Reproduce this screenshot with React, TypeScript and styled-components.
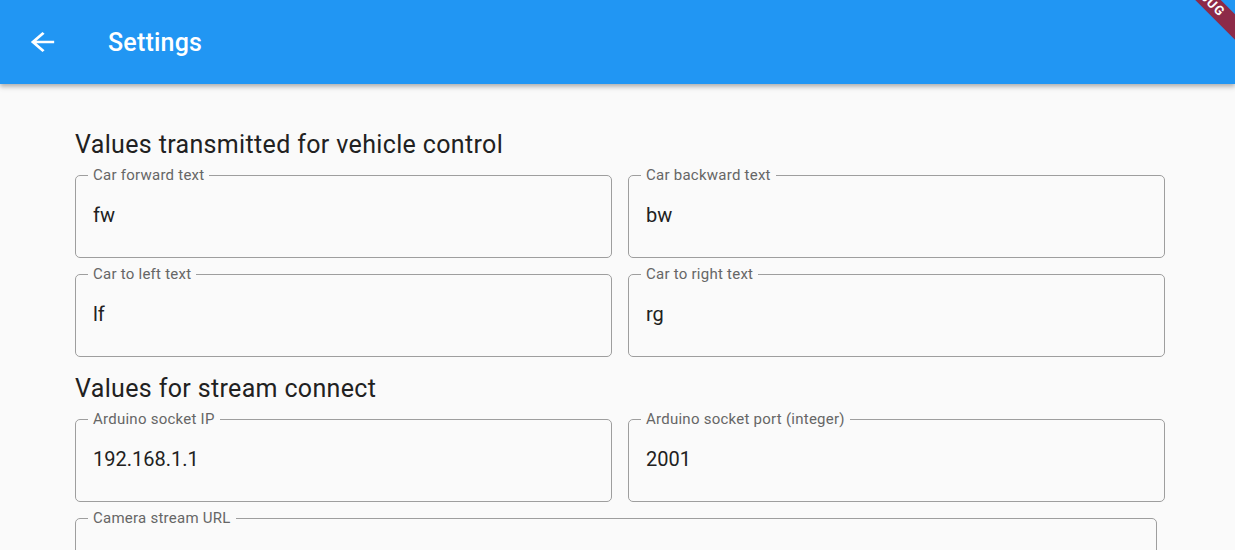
import React from 'react';
import styled, { createGlobalStyle } from 'styled-components';

const GlobalStyle = createGlobalStyle`
  html, body {
    margin: 0;
    padding: 0;
    background: #fafafa;
    overflow: hidden;
    font-family: Roboto, "Noto Sans", "Liberation Sans", sans-serif;
  }
`;

const Screen = styled.div`
  position: relative;
  width: 100%;
  min-height: 100vh;
  overflow: hidden;
  background: #fafafa;
`;

const AppBar = styled.header`
  position: relative;
  z-index: 2;
  height: 84px;
  display: flex;
  align-items: center;
  background: #2196f3;
  box-shadow: 0 2px 4px rgba(0, 0, 0, 0.2), 0 4px 5px rgba(0, 0, 0, 0.12);
`;

const BackButton = styled.button`
  width: 84px;
  height: 84px;
  margin: 0;
  padding: 0;
  border: none;
  background: transparent;
  display: flex;
  align-items: center;
  justify-content: center;
  color: #fff;
  cursor: pointer;
`;

const Title = styled.h1`
  margin: 0 0 0 24px;
  font-size: 25px;
  font-weight: 500;
  color: #fff;
  letter-spacing: 0.2px;
`;

// debug ribbon in the corner, clipped by the screen edge
const DebugBanner = styled.div`
  position: absolute;
  z-index: 3;
  top: -11px;
  right: -71px;
  width: 200px;
  height: 18px;
  transform: rotate(45deg);
  background: #8d2a48;
  color: #fff;
  font-size: 13px;
  font-weight: 700;
  letter-spacing: 1px;
  line-height: 18px;
  text-align: center;
`;

const Content = styled.main`
  display: flex;
  flex-direction: column;
  gap: 7px;
  padding: 47px 70px 0 75px;
`;

const SectionTitle = styled.h2<{ $first?: boolean }>`
  margin: ${p => (p.$first ? '0' : '11px')} 0 0;
  font-size: 25px;
  line-height: 28px;
  font-weight: 400;
  letter-spacing: 0.35px;
  color: #212121;
`;

const FieldGrid = styled.div`
  display: grid;
  grid-template-columns: 1fr 1fr;
  column-gap: 16px;
  row-gap: 7px;
`;

const Field = styled.fieldset<{ $inset?: number }>`
  min-width: 0;
  margin: 0 ${p => p.$inset ?? 0}px 0 0;
  padding: 0 17px 30px;
  border: 1px solid #9e9e9e;
  border-radius: 5px;
`;

const Label = styled.legend`
  margin-left: -5px;
  padding: 0 5px;
  font-size: 15px;
  line-height: 18px;
  letter-spacing: 0.25px;
  color: #666;
`;

const Value = styled.div`
  padding-top: 19px;
  font-size: 20px;
  line-height: 24px;
  color: #212121;
  white-space: nowrap;
  overflow: hidden;
`;

const BackArrow = () => (
  <svg width="35" height="30" viewBox="0 0 24 24" preserveAspectRatio="none" fill="currentColor">
    <path d="M20 11H7.83l5.59-5.59L12 4l-8 8 8 8 1.41-1.41L7.83 13H20v-2z" />
  </svg>
);

const TextField = ({ label, value, inset }: { label: string; value: string; inset?: number }) => (
  <Field $inset={inset}>
    <Label>{label}</Label>
    <Value>{value}</Value>
  </Field>
);

export default function App() {
  return (
    <Screen>
      <GlobalStyle />
      <AppBar>
        <BackButton aria-label="Back">
          <BackArrow />
        </BackButton>
        <Title>Settings</Title>
      </AppBar>
      <DebugBanner>DEBUG</DebugBanner>

      <Content>
        <SectionTitle $first>Values transmitted for vehicle control</SectionTitle>
        <FieldGrid>
          <TextField label="Car forward text" value="fw" />
          <TextField label="Car backward text" value="bw" />
          <TextField label="Car to left text" value="lf" />
          <TextField label="Car to right text" value="rg" />
        </FieldGrid>

        <SectionTitle>Values for stream connect</SectionTitle>
        <FieldGrid>
          <TextField label="Arduino socket IP" value="192.168.1.1" />
          <TextField label="Arduino socket port (integer)" value="2001" />
        </FieldGrid>
        <TextField label="Camera stream URL" value="http://192.168.1.1:81/stream" inset={8} />
      </Content>
    </Screen>
  );
}
